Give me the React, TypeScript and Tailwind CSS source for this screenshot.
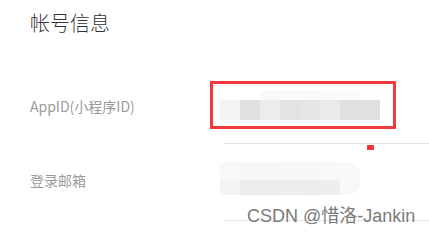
const appIdBlocks = ["#f3f3f3", "#e0e0e0", "#ececec", "#e3e3e3", "#e5e5e5", "#eaeaea", "#e0e0e0", "#e0e0e0"];
const appIdTop = ["#ffffff", "#ffffff", "#f9f9f9", "#fafafa", "#fafafa", "#fbfbfb", "#fbfbfb", "#fdfdfd"];
const mailTop = ["#f8f8f8", "#f6f6f6", "#f6f6f6", "#f7f7f7", "#f7f7f7", "#f8f8f8", "#f9f9f9"];
const mailBottom = ["#f3f3f3", "#ececec", "#ececec", "#ededed", "#ececec", "#eeeeee", "#f8f8f8"];

function Blocks({ colors, h }: { colors: string[]; h: string }) {
  return (
    <div className="flex">
      {colors.map((c, i) => (
        <div key={i} className={`w-[20px] ${h}`} style={{ backgroundColor: c }} />
      ))}
    </div>
  );
}

export default function App() {
  return (
    <div
      className="relative w-[429px] h-[235px] overflow-hidden bg-white pl-[30px] pt-[10px]"
      style={{ fontFamily: '"Noto Sans CJK SC", "Noto Sans", sans-serif' }}
    >
      <div className="text-[20px] font-light leading-[26px] text-[#333333]">帐号信息</div>

      {/* AppID row */}
      <div className="mt-[44px] flex">
        <div className="w-[190px] pt-[16px] text-[14px] leading-[20px] text-[#9a9a9a]">AppID(小程序ID)</div>
        <div className="relative flex-1 pt-[10px]">
          <Blocks colors={appIdTop} h="h-[10px]" />
          <Blocks colors={appIdBlocks} h="h-[20px]" />
          <div className="h-[23px]" />
          <div className="ml-[4px] border-t border-[#e5e5e5]" />
          <div className="absolute left-[-10px] top-[1px] h-[48px] w-[186px] border-[3px] border-[#f23a3a]" />
          <div className="absolute left-[147px] top-[65px] h-[5px] w-[7px] bg-[#f23a3a]" />
        </div>
      </div>

      {/* Email row */}
      <div className="flex">
        <div className="w-[190px] pt-[26px] text-[14px] leading-[20px] text-[#9a9a9a]">登录邮箱</div>
        <div className="flex-1 pt-[18px]">
          <div className="w-[140px] overflow-hidden rounded-r-[14px]">
            <Blocks colors={mailTop} h="h-[18px]" />
            <Blocks colors={mailBottom} h="h-[15px]" />
          </div>
          <div className="h-[25px]" />
          <div className="ml-[4px] border-t border-[#e5e5e5]" />
        </div>
      </div>

      <div
        className="absolute left-[247px] top-[204px] text-[18px] leading-[24px] text-[#7a7a7a]"
        style={{
          fontFamily: '"Liberation Sans", "Noto Sans CJK SC", sans-serif',
          textShadow: "0 0 1px #fff, 0 0 1px #fff",
        }}
      >
        CSDN @惜洛-Jankin
      </div>
    </div>
  );
}
